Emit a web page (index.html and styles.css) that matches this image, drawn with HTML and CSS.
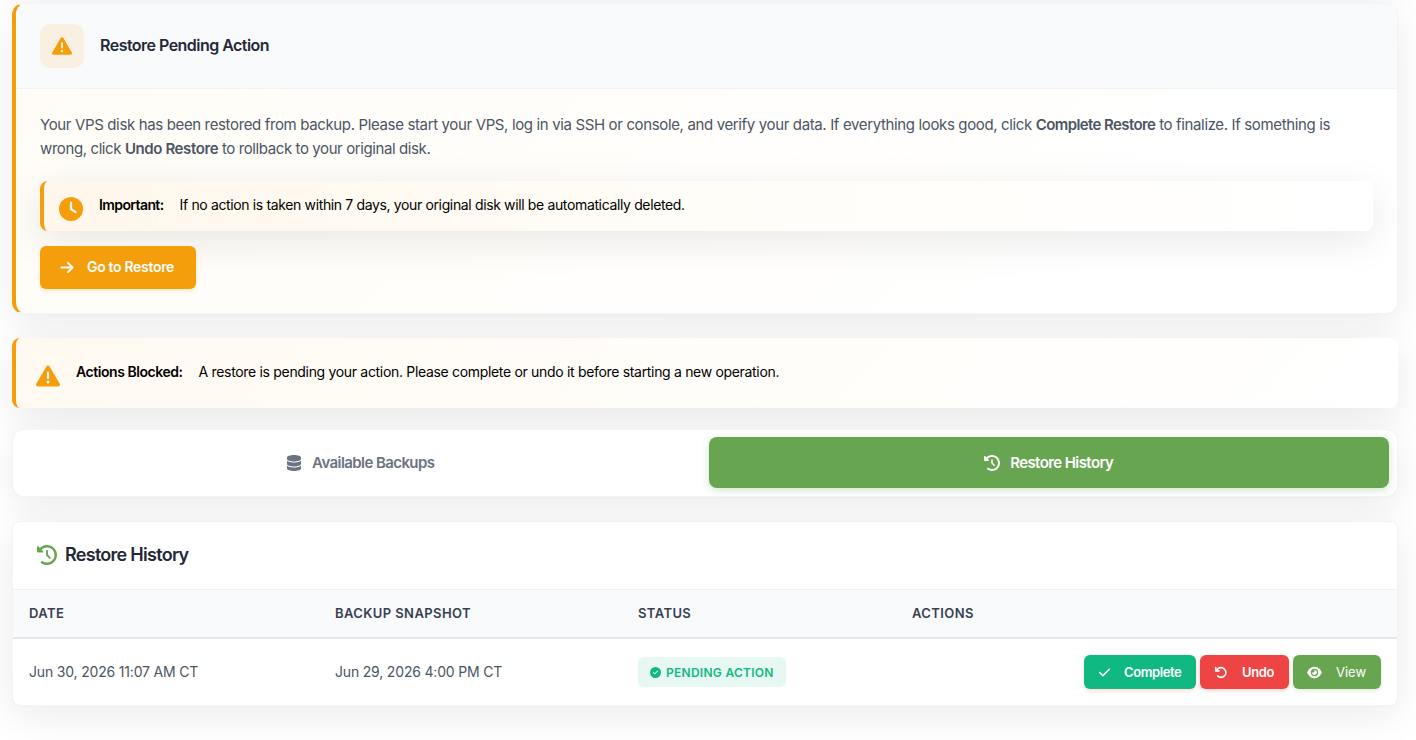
FILE: index.html
```
<!DOCTYPE html>
<html lang="en">
<head>
    <meta charset="UTF-8">
    <meta name="viewport" content="width=device-width, initial-scale=1.0">
    <title>Restore History</title>
    <link rel="stylesheet" href="styles.css">
</head>
<body>

<svg class="icon-defs" xmlns="http://www.w3.org/2000/svg">
    <symbol id="icon-warning" viewBox="0 0 512 512"><path d="M256 32c14.2 0 27.3 7.5 34.5 19.8l216 368c7.3 12.4 7.3 27.7 .2 40.1S486.3 480 472 480H40c-14.3 0-27.6-7.7-34.7-20.1s-7-27.8 .2-40.1l216-368C228.7 39.5 241.8 32 256 32zm0 128c-13.3 0-24 10.7-24 24V296c0 13.3 10.7 24 24 24s24-10.7 24-24V184c0-13.3-10.7-24-24-24zm32 224a32 32 0 1 0 -64 0 32 32 0 1 0 64 0z"/></symbol>
    <symbol id="icon-clock" viewBox="0 0 512 512"><path d="M256 0a256 256 0 1 1 0 512A256 256 0 1 1 256 0zM232 120V256c0 8 4 15.5 10.7 20l96 64c11 7.4 25.9 4.4 33.3-6.7s4.4-25.9-6.7-33.3L280 243.2V120c0-13.3-10.7-24-24-24s-24 10.7-24 24z"/></symbol>
    <symbol id="icon-arrow" viewBox="0 0 448 512"><path d="M438.6 278.6c12.5-12.5 12.5-32.8 0-45.3l-160-160c-12.5-12.5-32.8-12.5-45.3 0s-12.5 32.8 0 45.3L338.8 224 32 224c-17.7 0-32 14.3-32 32s14.3 32 32 32l306.7 0L233.4 393.4c-12.5 12.5-12.5 32.8 0 45.3s32.8 12.5 45.3 0l160-160z"/></symbol>
    <symbol id="icon-database" viewBox="0 0 448 512"><path d="M448 80v48c0 44.2-100.3 80-224 80S0 172.2 0 128V80C0 35.8 100.3 0 224 0S448 35.8 448 80zM393.2 214.7c20.8-7.4 39.9-16.9 54.8-28.6V288c0 44.2-100.3 80-224 80S0 332.2 0 288V186.1c14.9 11.8 34 21.2 54.8 28.6C99.7 230.7 159.5 240 224 240s124.3-9.3 169.2-25.3zM0 346.1c14.9 11.8 34 21.2 54.8 28.6C99.7 390.7 159.5 400 224 400s124.3-9.3 169.2-25.3c20.8-7.4 39.9-16.9 54.8-28.6V432c0 44.2-100.3 80-224 80S0 476.2 0 432V346.1z"/></symbol>
    <symbol id="icon-history" viewBox="0 0 512 512"><path d="M75 75L41 41C25.9 25.9 0 36.6 0 57.9V168c0 13.3 10.7 24 24 24H134.1c21.4 0 32.1-25.9 17-41l-30.8-30.8C155 85.5 203 64 256 64c106 0 192 86 192 192s-86 192-192 192c-40.8 0-78.6-12.7-109.7-34.4c-14.5-10.1-34.4-6.6-44.6 7.9s-6.6 34.4 7.9 44.6C151.2 495 201.7 512 256 512c141.4 0 256-114.6 256-256S397.4 0 256 0C185.3 0 121.3 28.7 75 75zm181 53c-13.3 0-24 10.7-24 24V256c0 6.4 2.5 12.5 7 17l72 72c9.4 9.4 24.6 9.4 33.9 0s9.4-24.6 0-33.9l-65-65V152c0-13.3-10.7-24-24-24z"/></symbol>
    <symbol id="icon-check" viewBox="0 0 448 512"><path d="M438.6 105.4c12.5 12.5 12.5 32.8 0 45.3l-256 256c-12.5 12.5-32.8 12.5-45.3 0l-128-128c-12.5-12.5-12.5-32.8 0-45.3s32.8-12.5 45.3 0L160 338.7 393.4 105.4c12.5-12.5 32.8-12.5 45.3 0z"/></symbol>
    <symbol id="icon-undo" viewBox="0 0 512 512"><path d="M125.7 160H176c17.7 0 32 14.3 32 32s-14.3 32-32 32H48c-17.7 0-32-14.3-32-32V64c0-17.7 14.3-32 32-32s32 14.3 32 32v51.2L97.6 97.6c87.5-87.5 229.3-87.5 316.8 0s87.5 229.3 0 316.8s-229.3 87.5-316.8 0c-12.5-12.5-12.5-32.8 0-45.3s32.8-12.5 45.3 0c62.5 62.5 163.8 62.5 226.3 0s62.5-163.8 0-226.3s-163.8-62.5-226.3 0L125.7 160z"/></symbol>
    <symbol id="icon-eye" viewBox="0 0 576 512"><path d="M288 32c-80.8 0-145.5 36.8-192.6 80.6C48.6 156 17.3 208 2.5 243.7c-3.3 7.9-3.3 16.7 0 24.6C17.3 304 48.6 356 95.4 399.4C142.5 443.2 207.2 480 288 480s145.5-36.8 192.6-80.6c46.8-43.5 78.1-95.4 93-131.1c3.3-7.9 3.3-16.7 0-24.6c-14.9-35.7-46.2-87.7-93-131.1C433.5 68.8 368.8 32 288 32zM144 256a144 144 0 1 1 288 0 144 144 0 1 1 -288 0zm144-64c0 35.3-28.7 64-64 64c-7.1 0-13.9-1.2-20.3-3.3c-5.5-1.8-11.9 1.6-11.7 7.4c.3 6.9 1.3 13.8 3.2 20.7c13.7 51.2 66.4 81.6 117.6 67.9s81.6-66.4 67.9-117.6c-11.1-41.5-47.8-69.4-88.6-71.1c-5.8-.2-9.2 6.1-7.4 11.7c2.1 6.4 3.3 13.2 3.3 20.3z"/></symbol>
    <symbol id="icon-circle-check" viewBox="0 0 512 512"><path d="M256 512A256 256 0 1 0 256 0a256 256 0 1 0 0 512zM369 209L241 337c-9.4 9.4-24.6 9.4-33.9 0l-64-64c-9.4-9.4-9.4-24.6 0-33.9s24.6-9.4 33.9 0l47 47L335 175c9.4-9.4 24.6-9.4 33.9 0s9.4 24.6 0 33.9z"/></symbol>
</svg>

<main class="container">
    <!-- bottom edge of the panel scrolled out above -->
    <div class="card panel-above"></div>

    <section class="card pending-card">
        <div class="pending-header">
            <span class="icon-box"><svg class="icon"><use href="#icon-warning"/></svg></span>
            <h2>Restore Pending Action</h2>
        </div>
        <div class="pending-body">
            <p>
                <span class="line-one">Your VPS disk has been restored from backup. Please start your VPS, log in via SSH or console, and verify your data. If everything looks good, click <strong>Complete Restore</strong> to finalize. If something is</span><br>
                <span class="line-two">wrong, click <strong>Undo Restore</strong> to rollback to your original disk.</span>
            </p>
            <div class="alert alert-inner">
                <svg class="icon"><use href="#icon-clock"/></svg>
                <strong class="important">Important:</strong>
                <span class="important-text">If no action is taken within 7 days, your original disk will be automatically deleted.</span>
            </div>
            <a class="btn btn-restore"><svg class="icon"><use href="#icon-arrow"/></svg><span>Go to Restore</span></a>
        </div>
    </section>

    <div class="alert alert-blocked">
        <svg class="icon"><use href="#icon-warning"/></svg>
        <strong class="blocked">Actions Blocked:</strong>
        <span class="blocked-text">A restore is pending your action. Please complete or undo it before starting a new operation.</span>
    </div>

    <nav class="card tabs">
        <a class="tab tab-backups"><svg class="icon"><use href="#icon-database"/></svg><span>Available Backups</span></a>
        <a class="tab tab-history active"><svg class="icon"><use href="#icon-history"/></svg><span>Restore History</span></a>
    </nav>

    <section class="card history-card">
        <h2 class="history-title"><svg class="icon"><use href="#icon-history"/></svg><span>Restore History</span></h2>
        <table class="history-table">
            <thead>
                <tr>
                    <th class="col-date">Date</th>
                    <th class="col-snapshot">Backup Snapshot</th>
                    <th class="col-status">Status</th>
                    <th>Actions</th>
                </tr>
            </thead>
            <tbody>
                <tr>
                    <td class="date">Jun 30, 2026 11:07 AM CT</td>
                    <td class="snapshot">Jun 29, 2026 4:00 PM CT</td>
                    <td><span class="badge"><svg class="icon"><use href="#icon-circle-check"/></svg><span>Pending Action</span></span></td>
                    <td>
                        <div class="actions">
                            <a class="btn btn-sm btn-complete"><svg class="icon"><use href="#icon-check"/></svg><span>Complete</span></a>
                            <a class="btn btn-sm btn-undo"><svg class="icon"><use href="#icon-undo"/></svg><span>Undo</span></a>
                            <a class="btn btn-sm btn-view"><svg class="icon"><use href="#icon-eye"/></svg><span>View</span></a>
                        </div>
                    </td>
                </tr>
            </tbody>
        </table>
    </section>
</main>

</body>
</html>
```
FILE: styles.css
```
* {
    box-sizing: border-box;
}

body {
    margin: 0;
    height: 740px;
    overflow: hidden;
    background-color: #ffffff;
    color: #000000;
    font-family: Inter, "Open Sans", sans-serif;
    font-size: 14px;
}

h2, p {
    margin: 0;
}

strong {
    font-weight: 600;
}

.icon-defs {
    display: none;
}

.icon {
    fill: currentColor;
    flex: none;
}

.container {
    display: flow-root;
    padding: 0 18px 0 12px;
}

.card {
    background-color: #ffffff;
    border: 1px solid #f3f4f6;
    border-radius: 12px;
    box-shadow: 0 10px 40px rgba(0, 0, 0, 0.08), 0 1px 3px rgba(0, 0, 0, 0.02);
}

.panel-above {
    height: 80px;
    margin-top: -101px;
    margin-bottom: 24px;
}

/* Pending restore */
.pending-card {
    height: 311px;
    border-left: 4px solid #f59e0b;
    background: linear-gradient(135deg, #fffcf6 0%, #ffffff 80%);
    overflow: hidden;
}

.pending-header {
    height: 85px;
    padding: 0 24px 2px;
    display: flex;
    align-items: center;
    gap: 16px;
    background-color: #f9fafc;
    border-bottom: 1px solid #f1f2f5;
}

.icon-box {
    width: 44px;
    height: 44px;
    margin-top: 2px;
    border-radius: 10px;
    background-color: #f9f0e1;
    color: #f59e0b;
    display: flex;
    align-items: center;
    justify-content: center;
}

.icon-box .icon {
    width: 20px;
    height: 20px;
}

.pending-header h2 {
    color: #1f2937;
    font-size: 16px;
    font-weight: 600;
    letter-spacing: -0.53px;
}

.pending-body {
    padding: 24px;
}

.pending-body p {
    height: 48px;
    margin-bottom: 20px;
    color: #4b5563;
    font-size: 15px;
    line-height: 24px;
    white-space: nowrap;
}

.line-one {
    letter-spacing: -0.36px;
}

.line-one strong {
    letter-spacing: -0.6px;
}

.line-two {
    letter-spacing: -0.4px;
}

.alert {
    display: flex;
    border-left: 4px solid #f59e0b;
    border-radius: 8px;
    background: linear-gradient(90deg, #fff7ec 0%, #fffdf8 50%, #ffffff 100%);
    box-shadow: 0 10px 40px rgba(0, 0, 0, 0.09);
    line-height: 20px;
    white-space: nowrap;
}

.alert .icon {
    width: 24px;
    height: 24px;
    color: #f59e0b;
}

.alert strong {
    margin: 0 16px;
}

.alert-inner {
    height: 50px;
    padding: 14px 15px;
    margin-bottom: 15px;
}

.alert-inner .icon {
    margin-top: 2px;
}

.alert-blocked {
    height: 70px;
    margin-top: 24px;
    padding: 24px 20px;
    background: linear-gradient(135deg, #fff9f1 0%, #fffdf9 50%, #ffffff 100%);
}

.alert-blocked .icon {
    margin-top: 2px;
}

.important {
    letter-spacing: -0.6px;
}

.blocked {
    letter-spacing: -0.45px;
}

.important-text {
    letter-spacing: -0.36px;
}

.blocked-text {
    letter-spacing: -0.32px;
}

.btn {
    display: inline-flex;
    align-items: center;
    border-radius: 6px;
    color: #ffffff;
    font-size: 14px;
    font-weight: 600;
    white-space: nowrap;
}

.btn span, .tab span {
    padding-bottom: 1px;
}

.btn-restore {
    width: 156px;
    height: 43px;
    padding-left: 20px;
    gap: 13px;
    background-color: #f59e0b;
    box-shadow: 0 2px 4px rgba(245, 158, 11, 0.2);
    letter-spacing: -0.32px;
}

.btn-restore span {
    padding-bottom: 2px;
}

.btn-restore .icon {
    width: 14px;
    height: 15px;
}

/* Tabs */
.tabs {
    height: 68px;
    margin-top: 21px;
    padding: 7px 8px 8px 7px;
    display: flex;
    gap: 8px;
}

.tab {
    flex: 1;
    display: flex;
    align-items: center;
    justify-content: center;
    border-radius: 8px;
    color: #6b7280;
    font-size: 15px;
    font-weight: 600;
    letter-spacing: -0.58px;
}

.tab .icon {
    width: 16px;
    height: 16px;
    margin-right: 10px;
}

.tab.active {
    background-color: #68a551;
    box-shadow: 0 2px 8px rgba(104, 165, 81, 0.3);
    color: #ffffff;
}

/* History table */
.history-card {
    height: 185px;
    margin-top: 24px;
    border-radius: 8px;
    overflow: hidden;
}

.history-title {
    height: 67px;
    padding: 0 0 2px 24px;
    display: flex;
    align-items: center;
    gap: 8px;
    color: #1f2937;
    font-size: 18px;
    font-weight: 600;
    letter-spacing: -0.72px;
}

.history-title .icon {
    width: 20px;
    height: 20px;
    color: #68a551;
}

.history-table {
    width: 100%;
    border-collapse: separate;
    border-spacing: 0;
    table-layout: fixed;
    color: #4b5563;
}

.history-table th {
    height: 50px;
    padding: 0 16px 2px;
    background-color: #f9fafc;
    border-top: 1px solid #f1f2f5;
    border-bottom: 2px solid #e5e7eb;
    color: #374151;
    font-size: 13px;
    font-weight: 600;
    letter-spacing: 0.4px;
    text-align: left;
    text-transform: uppercase;
}

.col-date {
    width: 306px;
}

.col-snapshot {
    width: 303px;
}

.col-status {
    width: 274px;
}

.history-table td {
    height: 66px;
    padding: 0 16px;
    white-space: nowrap;
}

.history-table .date, .history-table .snapshot {
    padding-bottom: 2px;
    letter-spacing: -0.18px;
}

.badge {
    width: 148px;
    height: 30px;
    padding-left: 12px;
    display: flex;
    align-items: center;
    gap: 5px;
    border-radius: 6px;
    background-color: #e7f8f2;
    color: #10b981;
    font-size: 12px;
    font-weight: 600;
    letter-spacing: 0.27px;
    text-transform: uppercase;
}

.badge .icon {
    width: 11px;
    height: 11px;
}

.actions {
    display: flex;
    justify-content: flex-end;
    gap: 4px;
}

.btn-sm {
    height: 34px;
    padding-left: 14px;
    font-size: 13px;
    letter-spacing: -0.4px;
}

.btn-sm .icon {
    height: 13px;
}

.btn-complete {
    width: 112px;
    gap: 13px;
    background-color: #10b981;
    box-shadow: 0 2px 4px rgba(239, 68, 68, 0.2);
}

.btn-complete .icon {
    width: 13px;
}

.btn-undo {
    width: 89px;
    gap: 14px;
    background-color: #ef4444;
    box-shadow: 0 2px 4px rgba(239, 68, 68, 0.2);
}

.btn-undo .icon {
    width: 14px;
}

.btn-view {
    width: 88px;
    gap: 14px;
    background-color: #68a551;
    box-shadow: 0 2px 4px rgba(104, 165, 81, 0.2);
    font-weight: 400;
    letter-spacing: 0;
}

.btn-view .icon {
    width: 15px;
}
```
